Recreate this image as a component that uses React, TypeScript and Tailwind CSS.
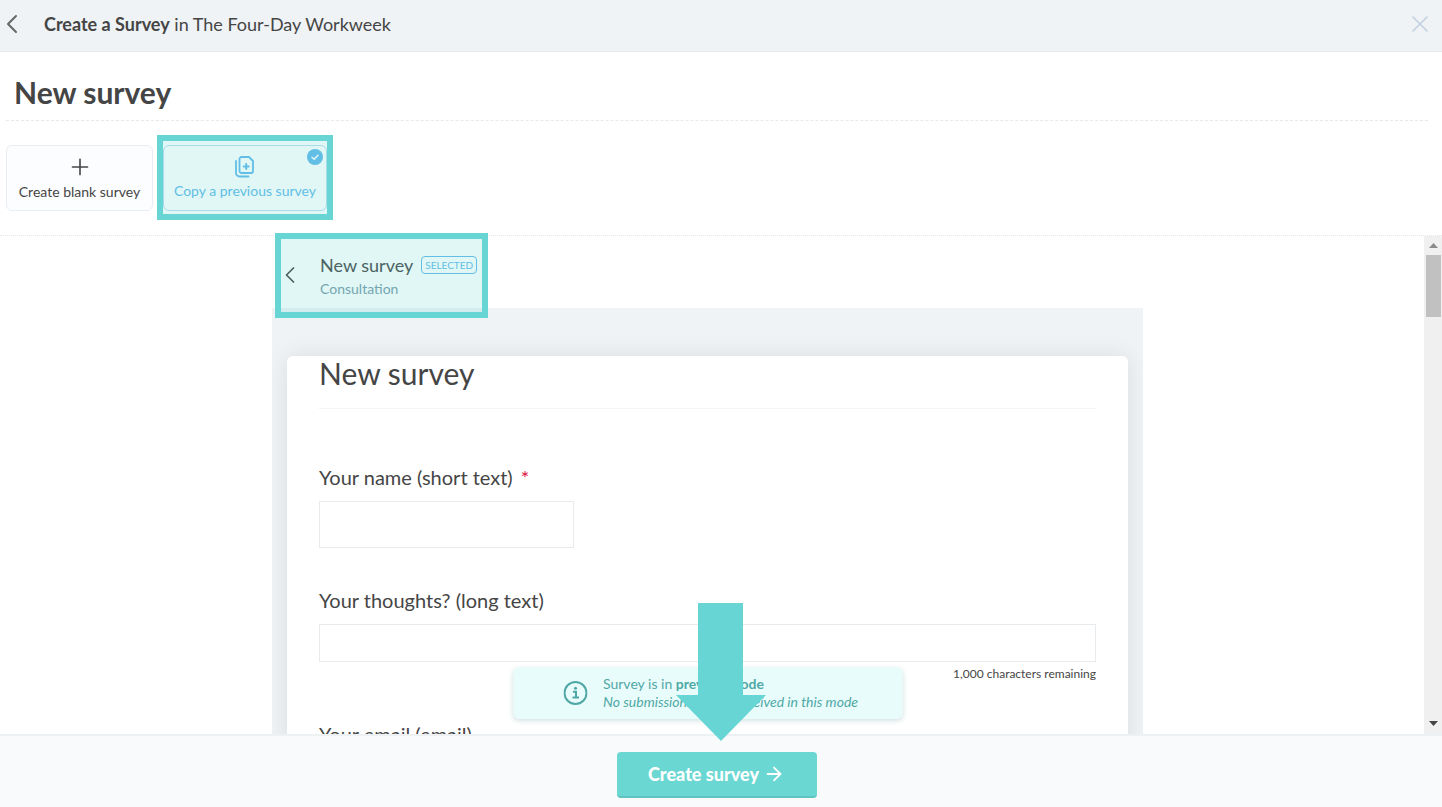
import type { ReactNode } from "react";
import { ArrowRight, ChevronLeft, Plus, X } from "lucide-react";

function CopyIcon() {
  return (
    <svg width="24" height="24" viewBox="0 0 24 24" fill="none" stroke="currentColor" strokeWidth="1.800" strokeLinecap="round" strokeLinejoin="round" aria-hidden="true">
      <path d="M8.500 2h7.500L20 6v10a2 2 0 0 1-2 2H8.500a2 2 0 0 1-2-2V4a2 2 0 0 1 2-2z" />
      <path d="M3 6v12a3.500 3.500 0 0 0 3.500 3.500h9" />
      <path d="M13.200 9v5M10.700 11.500h5" strokeWidth="2" />
    </svg>
  );
}

function CheckBadge() {
  return (
    <svg className="absolute right-[3px] top-[3px]" width="16" height="16" viewBox="0 0 16 16" aria-hidden="true">
      <circle cx="8" cy="8" r="8" fill="#62b8ea" />
      <path d="M5 8.300l2.200 2 3.800-4.100" fill="none" stroke="#ffffff" strokeWidth="1.500" strokeLinecap="round" strokeLinejoin="round" />
    </svg>
  );
}

function InfoIcon() {
  return (
    <svg className="shrink-0" width="24" height="24" viewBox="0 0 24 24" fill="none" stroke="currentColor" strokeWidth="2" aria-hidden="true">
      <circle cx="12" cy="12" r="11" />
      <path d="M9.500 10.700h3v5.300M9 16.500h6.500" />
      <circle cx="12" cy="7.300" r="1.500" fill="currentColor" stroke="none" />
    </svg>
  );
}

function Field({ id, label, required, children }: { id: string; label: string; required?: boolean; children?: ReactNode }) {
  return (
    <div className="flex flex-col">
      <label htmlFor={id} className="mb-2 text-[20px] leading-8">
        {label}
        {required && <span className="ml-2 text-[#e0143c]">*</span>}
      </label>
      {children}
    </div>
  );
}

export default function App() {
  return (
    <div className="flex h-screen flex-col overflow-hidden bg-white font-[Lato,sans-serif] text-[#454545]">
      <header className="flex h-[52px] shrink-0 items-center border-b border-[#e2e8ec] bg-[#eff3f6] pb-1 pr-2">
        <button type="button" aria-label="Back" className="-ml-1 mr-4 text-[#666]">
          <ChevronLeft size={32} strokeWidth={1.500} />
        </button>
        <p className="flex-1 text-[18px] leading-6">
          <b>Create a Survey</b> in The Four-Day Workweek
        </p>
        <button type="button" aria-label="Close" className="text-[#c3d1e0]">
          <X size={28} strokeWidth={1.500} />
        </button>
      </header>

      <section className="shrink-0 border-b border-dotted border-[#e6e9eb] pb-6">
        <div className="mx-[6px] mr-[14px] border-b border-dashed border-[#e6e9eb] px-2 pb-[10px] pt-[22px]">
          <h1 className="text-[30px] font-bold leading-9">New survey</h1>
        </div>
        <div className="flex gap-[10px] px-[6px] pt-6">
          <button type="button" className="flex h-[66px] w-[147px] flex-col items-center justify-center rounded-md border border-[#e9edf1] bg-[#fcfdfe] pt-[2px] text-[14px] leading-6">
            <Plus size={26} strokeWidth={1.500} />
            <span>Create blank survey</span>
          </button>
          <button type="button" className="relative flex h-[66px] w-[164px] flex-col items-center justify-center rounded-md border border-[#b9dcef] pt-[2px] text-[14px] leading-6 text-[#62b8ea]">
            <CopyIcon />
            <span className="whitespace-nowrap">Copy a previous survey</span>
            <CheckBadge />
            <span className="pointer-events-none absolute -inset-x-[7px] -bottom-[10px] -top-[11px] border-6 border-[#66d5d3] bg-[#66d5d3]/20" />
          </button>
        </div>
      </section>

      <main className="flex min-h-0 flex-1">
        <div className="flex min-w-0 flex-1 flex-col pr-[9px]">
          <div className="relative mx-auto flex min-h-0 w-full max-w-[871px] flex-1 flex-col">
            <div className="relative flex h-[72px] shrink-0 items-center gap-4 pl-1 pt-[6px]">
              <button type="button" aria-label="Back to surveys">
                <ChevronLeft size={28} strokeWidth={1.500} />
              </button>
              <div className="pt-1">
                <div className="flex items-center gap-2">
                  <h2 className="text-[18px] leading-6">New survey</h2>
                  <span className="rounded-sm border border-[#62b8ea] px-[3px] text-[10px] leading-4 text-[#62b8ea]">SELECTED</span>
                </div>
                <p className="text-[14px] leading-6 text-[#7a99a8]">Consultation</p>
              </div>
              <div className="pointer-events-none absolute -bottom-[10px] -top-[3px] left-[3px] w-[213px] border-6 border-[#66d5d3] bg-[#66d5d3]/20" />
            </div>
            <div className="min-h-0 flex-1 overflow-hidden bg-[#eff3f6] px-[15px] pt-12">
              <form className="rounded-t-md bg-white px-8 pb-16 shadow-[0_0_24px_rgba(0,0,0,0.09)]">
                <h3 className="border-b border-[#f2f4f5] pb-[18px] text-[30px] leading-[34px]">New survey</h3>
                <div className="flex flex-col gap-9 pt-[52px]">
                  <Field id="name" label="Your name (short text)" required>
                    <input id="name" type="text" className="h-[47px] w-[255px] border border-[#e8ebed] px-3 outline-none" />
                  </Field>
                  <Field id="thoughts" label="Your thoughts? (long text)">
                    <textarea id="thoughts" className="h-[38px] w-full resize-none border border-[#e8ebed] px-3 outline-none" />
                    <p className="pt-1 text-right text-[12px] leading-4">1,000 characters remaining</p>
                  </Field>
                  <Field id="email" label="Your email (email)">
                    <input id="email" type="email" className="h-[47px] w-[255px] border border-[#e8ebed] px-3 outline-none" />
                  </Field>
                </div>
              </form>
            </div>
            <div role="status" className="absolute bottom-[15px] left-1/2 flex w-[389px] -translate-x-1/2 items-center gap-4 rounded-md bg-[#e9fcfc] py-2 pl-[50px] text-[#4fa8a5] shadow-[0_2px_5px_rgba(40,120,120,0.2)]">
              <InfoIcon />
              <div className="text-[14px] leading-[18px]">
                <p>Survey is in <b>preview mode</b></p>
                <p className="italic">No submissions will be received in this mode</p>
              </div>
            </div>
          </div>
        </div>
        <div className="flex w-[18px] shrink-0 flex-col items-center justify-between bg-[#f0f0f0]" aria-hidden="true">
          <div className="flex w-full flex-col items-center">
            <svg className="my-[7px]" width="9" height="5" viewBox="0 0 9 5"><path d="M4.500 0L9 5H0z" fill="#8b8b8b" /></svg>
            <div className="h-[62px] w-[15px] bg-[#c1c1c1]" />
          </div>
          <svg className="mb-2" width="9" height="5" viewBox="0 0 9 5"><path d="M0 0h9L4.500 5z" fill="#454545" /></svg>
        </div>
      </main>

      <footer className="relative flex shrink-0 justify-center border-t-2 border-[#eef1f4] bg-[#f9fafc] pb-[9px] pr-[9px] pt-4">
        <button type="button" className="flex h-[46px] w-[200px] items-center justify-center gap-1 rounded border-b-2 border-[#5fc4c0] bg-[#6ad7d3] text-[18px] font-black text-white">
          Create survey
          <ArrowRight size={22} strokeWidth={2} />
        </button>
        <svg className="pointer-events-none absolute -top-[133px] left-1/2 -translate-x-1/2" width="90" height="138" viewBox="0 0 90 138" aria-hidden="true">
          <path d="M22 0h45v92h23L45 138 0 92h22z" fill="#66d5d3" />
        </svg>
      </footer>
    </div>
  );
}
